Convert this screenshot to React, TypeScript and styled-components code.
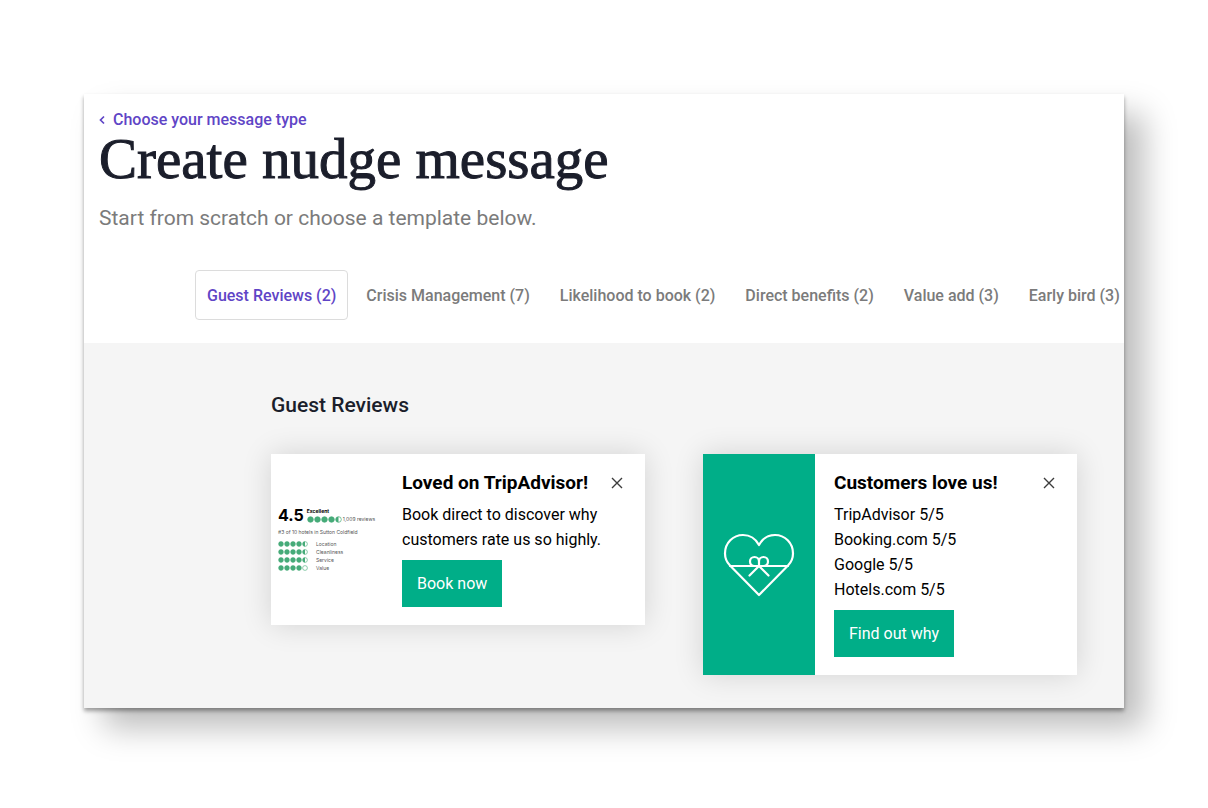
import React from "react";
import styled, { createGlobalStyle } from "styled-components";

const GlobalStyle = createGlobalStyle`
  * { box-sizing: border-box; }
  body {
    margin: 0;
    background: #fff;
    color: #000;
    font-family: Roboto, "Liberation Sans", sans-serif;
  }
  h1, h2, h3, p, ul { margin: 0; padding: 0; }
  button { font-family: inherit; cursor: pointer; }
`;

const Page = styled.div`
  padding: 94px 84px 100px;
`;

const Frame = styled.main`
  overflow: hidden;
  background: #fff;
  box-shadow: 0 3px 4px rgba(0, 0, 0, 0.36), 20px 20px 30px rgba(0, 0, 0, 0.26);
`;

const Header = styled.header`
  padding: 16px 15px 0;
`;

const BackLink = styled.a`
  display: flex;
  align-items: center;
  gap: 8px;
  color: #5f45c6;
  font-size: 16px;
  font-weight: 500;
  line-height: 20px;
  text-decoration: none;
`;

const Title = styled.h1`
  color: #1b1e2b;
  font-family: "Liberation Serif", serif;
  font-size: 57px;
  font-weight: 400;
  line-height: 58px;
  -webkit-text-stroke: 1px #1b1e2b;
`;

const Subtitle = styled.p`
  margin-top: 18px;
  color: #7b7b7b;
  font-size: 21px;
  line-height: 24px;
`;

const Tabs = styled.nav`
  display: flex;
  gap: 6px;
  margin-top: 40px;
  padding: 0 0 23px 111px;
  overflow: hidden;
`;

const Tab = styled.button<{ $active?: boolean }>`
  flex: none;
  height: 50px;
  padding: 0 11px;
  border: 1px solid ${(p) => (p.$active ? "#dcdcdc" : "transparent")};
  border-radius: 4px;
  background: transparent;
  color: ${(p) => (p.$active ? "#5f45c6" : "#7b7b7b")};
  font-size: 16px;
  font-weight: 500;
  white-space: nowrap;
`;

const Templates = styled.section`
  padding: 49px 47px 33px 187px;
  background: #f5f5f5;
`;

const SectionTitle = styled.h2`
  color: #1b1e2b;
  font-size: 21px;
  font-weight: 500;
  line-height: 26px;
`;

const CardGrid = styled.div`
  display: grid;
  grid-template-columns: 1fr 1fr;
  align-items: start;
  gap: 58px;
  margin-top: 36px;
`;

const Card = styled.article`
  display: flex;
  background: #fff;
  box-shadow: 0 0 28px rgba(0, 0, 0, 0.14);
`;

const Media = styled.div<{ $fill?: string }>`
  display: flex;
  flex: none;
  align-items: center;
  justify-content: center;
  width: 112px;
  background: ${(p) => p.$fill ?? "#fff"};
`;

const CardBody = styled.div`
  flex: 1;
  padding: 17px 21px 18px 19px;
`;

const CardHead = styled.div`
  display: flex;
  align-items: center;
  justify-content: space-between;
  margin-bottom: 7px;
`;

const CardTitle = styled.h3`
  font-size: 19px;
  font-weight: 700;
  line-height: 24px;
`;

const CloseButton = styled.button`
  display: flex;
  padding: 0;
  border: 0;
  background: transparent;
`;

const CardText = styled.p`
  font-size: 16px;
  line-height: 25px;
`;

const Action = styled.button`
  height: 47px;
  margin-top: 8px;
  padding: 0 15px;
  border: 0;
  background: #00ae88;
  color: #fff;
  font-size: 16px;
`;

const Rating = styled.div`
  width: 98px;
  color: #555;
  font-family: Inter, sans-serif;
  font-size: 5px;
  line-height: 8px;
  white-space: nowrap;
`;

const RatingTop = styled.div`
  display: flex;
  gap: 3px;
  margin-bottom: 5px;
`;

const Score = styled.strong`
  color: #000;
  font-size: 16px;
  line-height: 16px;
`;

const Excellent = styled.strong`
  display: block;
  color: #000;
`;

const RatingLine = styled.div<{ $gap: number }>`
  display: flex;
  align-items: center;
  gap: ${(p) => p.$gap}px;
  height: 8px;
`;

const Criteria = styled.div`
  margin-top: 4px;
`;

function Dots({ value, size }: { value: number; size: number }) {
  return (
    <svg width={size * 5} height={size} viewBox="0 0 50 10" aria-hidden="true">
      {[0, 1, 2, 3, 4].map((i) => {
        const fill = Math.min(1, Math.max(0, value - i));
        const x = i * 10 + 5;
        return (
          <g key={i}>
            <circle cx={x} cy="5" r="4" fill={fill === 1 ? "#46ab79" : "#fff"} stroke="#46ab79" strokeWidth="1" />
            {fill === 0.5 && <path d={`M${x} 1a4 4 0 0 0 0 8z`} fill="#46ab79" />}
          </g>
        );
      })}
    </svg>
  );
}

function CloseIcon() {
  return (
    <svg width="14" height="14" viewBox="0 0 14 14" aria-hidden="true">
      <path d="M2 2l10 10M12 2L2 12" fill="none" stroke="#3c3c3c" strokeWidth="1.4" />
    </svg>
  );
}

function HeartIcon() {
  return (
    <svg width="72" height="64" viewBox="0 0 72 64" fill="none" stroke="#fff" strokeWidth="2.2" strokeLinejoin="round" strokeLinecap="round" aria-hidden="true">
      <path d="M36 12C32.500 5.500 27 2 20 2 10 2 2 10 2 20.500c0 5 1.500 8.500 5 12L36 62l29-29.500c3.500-3.500 5-7 5-12C70 10 62 2 52 2 45 2 39.500 5.500 36 12z" />
      <path d="M7 33h58" />
      <path d="M36 33h-4.500c-2.800 0-4.500-2-4.500-4.500s1.900-4.500 4.500-4.500 4.500 2 4.500 4.500zM36 33h4.500c2.800 0 4.500-2 4.500-4.500s-1.900-4.500-4.500-4.500-4.500 2-4.500 4.500z" />
      <path d="M36 33l-9.500 9.500M36 33l9.500 9.500" />
    </svg>
  );
}

const tabs = [
  "Guest Reviews (2)",
  "Crisis Management (7)",
  "Likelihood to book (2)",
  "Direct benefits (2)",
  "Value add (3)",
  "Early bird (3)",
];

const criteria: [string, number][] = [
  ["Location", 4.5],
  ["Cleanliness", 4.5],
  ["Service", 4.5],
  ["Value", 4],
];

interface TemplateProps {
  title: string;
  lines: string[];
  action: string;
  fill?: string;
  media: React.ReactNode;
}

function TemplateCard({ title, lines, action, fill, media }: TemplateProps) {
  return (
    <Card>
      <Media $fill={fill}>{media}</Media>
      <CardBody>
        <CardHead>
          <CardTitle>{title}</CardTitle>
          <CloseButton type="button" aria-label="Close">
            <CloseIcon />
          </CloseButton>
        </CardHead>
        {lines.map((line) => (
          <CardText key={line}>{line}</CardText>
        ))}
        <Action type="button">{action}</Action>
      </CardBody>
    </Card>
  );
}

export default function App() {
  return (
    <>
      <GlobalStyle />
      <Page>
        <Frame>
          <Header>
            <BackLink href="#types">
              <svg width="6" height="10" viewBox="0 0 6 10" aria-hidden="true">
                <path d="M5 1.500L1.500 5 5 8.500" fill="none" stroke="currentColor" strokeWidth="1.700" />
              </svg>
              Choose your message type
            </BackLink>
            <Title>Create nudge message</Title>
            <Subtitle>Start from scratch or choose a template below.</Subtitle>
          </Header>
          <Tabs aria-label="Template categories">
            {tabs.map((label, i) => (
              <Tab key={label} type="button" $active={i === 0}>
                {label}
              </Tab>
            ))}
          </Tabs>
          <Templates>
            <SectionTitle>Guest Reviews</SectionTitle>
            <CardGrid>
              <TemplateCard
                title="Loved on TripAdvisor!"
                lines={["Book direct to discover why", "customers rate us so highly."]}
                action="Book now"
                media={
                  <Rating>
                    <RatingTop>
                      <Score>4.5</Score>
                      <div>
                        <Excellent>Excellent</Excellent>
                        <RatingLine $gap={1}>
                          <Dots value={4.5} size={7} />
                          1,009 reviews
                        </RatingLine>
                      </div>
                    </RatingTop>
                    <div>#3 of 10 hotels in Sutton Coldfield</div>
                    <Criteria>
                      {criteria.map(([name, value]) => (
                        <RatingLine key={name} $gap={8}>
                          <Dots value={value} size={6} />
                          {name}
                        </RatingLine>
                      ))}
                    </Criteria>
                  </Rating>
                }
              />
              <TemplateCard
                title="Customers love us!"
                lines={["TripAdvisor 5/5", "Booking.com 5/5", "Google 5/5", "Hotels.com 5/5"]}
                action="Find out why"
                fill="#00ae88"
                media={<HeartIcon />}
              />
            </CardGrid>
          </Templates>
        </Frame>
      </Page>
    </>
  );
}
